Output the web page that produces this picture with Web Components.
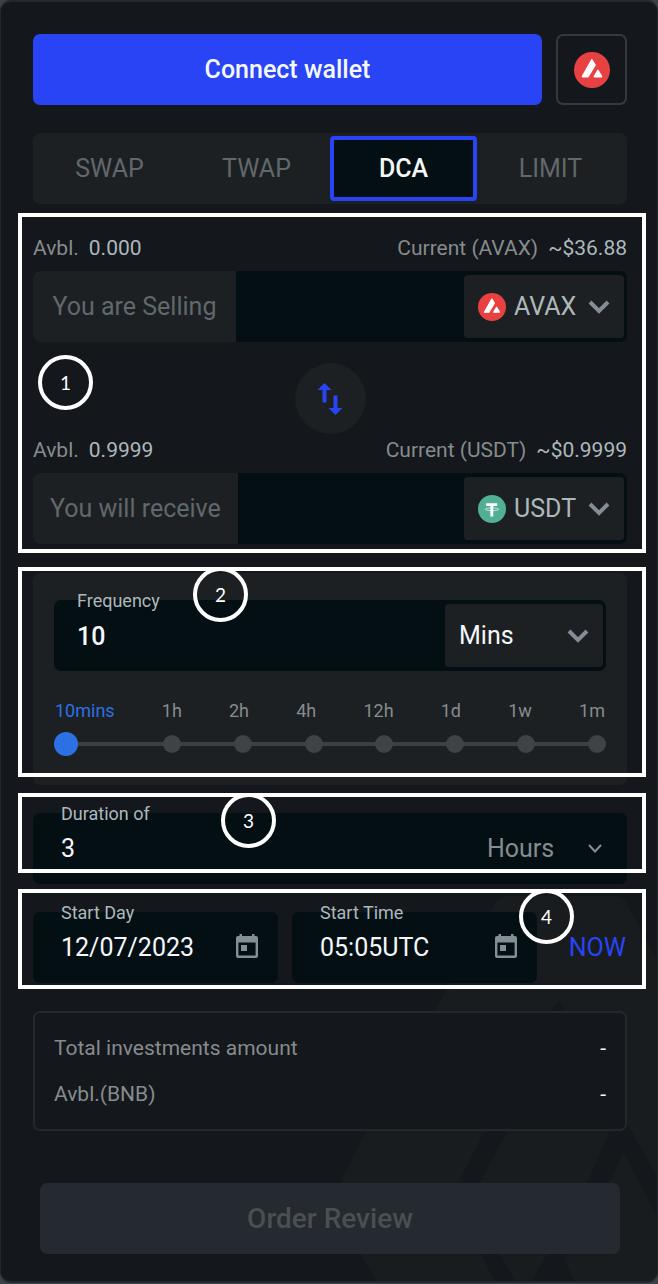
<!DOCTYPE html>
<html lang="en">
<head>
<meta charset="utf-8">
<meta name="viewport" content="width=device-width, initial-scale=1">
<title>DCA order</title>
<style>
  body {
    margin: 0;
    background: #3b4144;
    font-family: Roboto, "Liberation Sans", sans-serif;
    --surface: #14171b;
    --raised: #1c2022;
    --well: #040f14;
    --line: #21292d;
    --accent: #2944f5;
    --blue: #2b71e4;
    --muted: #60686b;
    --soft: #858c8e;
    --value: #adb8bd;
    --bright: #f4f8fa;
    --control: 71px;
    color: var(--value);
  }
</style>
</head>
<body>
<order-panel>
  <wallet-bar></wallet-bar>
  <mode-tabs></mode-tabs>
  <step-note number="1" style="--top:-19px;--bottom:-9px;--bx:16px;--by:138px">
    <token-pair></token-pair>
  </step-note>
  <step-note number="2" style="--top:-5px;--bottom:8px;--bx:171px">
    <frequency-card></frequency-card>
  </step-note>
  <step-note number="3" style="--top:-20px;--bottom:11px;--bx:199px">
    <duration-field></duration-field>
  </step-note>
  <step-note number="4" style="--top:-23px;--bottom:-6px;--bx:497px">
    <start-row></start-row>
  </step-note>
  <order-summary></order-summary>
  <review-button></review-button>
</order-panel>

<script>
const define = (name, html) => customElements.define(name, class extends HTMLElement {
  constructor() {
    super();
    const t = document.createElement('template');
    t.innerHTML = '<style>*{box-sizing:border-box}button,input,select{font:inherit;color:inherit;border:0;margin:0;padding:0;background:none;border-radius:0}svg{display:block}</style>' + (typeof html === 'function' ? html(this) : html);
    this.attachShadow({ mode: 'open' }).append(t.content.cloneNode(true));
  }
});

define('order-panel', `
<style>
  :host { display: flow-root; position: relative; overflow: hidden; background: var(--surface); border: 1px solid var(--line); border-width: 2px 1px; border-radius: 11px; }
  .mark { position: absolute; right: 0; bottom: 0; width: 319px; height: 392px; }
  main { position: relative; display: flex; flex-direction: column; gap: 28px; padding: 32px 30px 27px 32px; }
</style>
<svg class="mark" viewBox="339 892 319 392" fill="#181c1e" aria-hidden="true">
  <path d="M506 899H618Q624 899 627 905L658 962V1180L562 1007Q560 1003 557 1007L487 1132L461 1182Q452 1200 462 1219L496 1284H377L342 1222Q333 1206 342 1182L368 1132L492 914Q499 899 506 899Z"/>
  <path d="M515 1123H616L590 1182L533 1284H516L482 1222Q474 1208 482 1182Z"/>
  <path d="M624 1155L658 1218V1284H576L565 1263L612 1182Z"/>
</svg>
<main><slot></slot></main>`);

const avax = '<svg viewBox="0 0 36 36" aria-hidden="true"><circle cx="18" cy="18" r="18" fill="#e84142"/><path d="M17.8 7.8 21 13 14 24.6H8.4ZM23.9 18.4 27.6 24.6H20.3Z" fill="#fff" stroke="#fff" stroke-width="1.6" stroke-linejoin="round"/></svg>';
const usdt = '<svg viewBox="0 0 86 86" aria-hidden="true"><circle cx="43" cy="43" r="43" fill="#50af95"/><path d="M25 25H59V34H47V66H38V34H25Z" fill="#fff"/><ellipse cx="43" cy="44" rx="21" ry="4" fill="none" stroke="#fff" stroke-width="2"/></svg>';
const chevron = '<svg class="chev" viewBox="0 0 22 14" width="22" height="14" aria-hidden="true"><path d="M2 2 11 11 20 2" fill="none" stroke="#858c96" stroke-width="4"/></svg>';
const calendar = '<svg viewBox="0 0 22 24" width="22" height="24" aria-hidden="true"><path fill="#858f93" fill-rule="evenodd" d="M3.500 0H6V2H16V0H18.500V2H20Q22 2 22 4V22Q22 24 20 24H2Q0 24 0 22V4Q0 2 2 2H3.500ZM2.400 8.500V21.600H19.600V8.500ZM5 11H11V17H5Z"/></svg>';

define('wallet-bar', `
<style>
  :host { display: flex; gap: 14px; }
  button { height: var(--control); border-radius: 7px; cursor: pointer; }
  .connect { flex: 1; background: var(--accent); color: var(--bright); font-size: 25px; font-weight: 500; }
  .chain { width: var(--control); border: 2px solid #363a3d; display: grid; place-items: center; }
  svg { width: 36px; }
</style>
<button class="connect">Connect wallet</button>
<button class="chain" aria-label="Avalanche network">${avax}</button>`);

define('mode-tabs', `
<style>
  :host { display: block; }
  div { display: grid; grid-template-columns: repeat(4, 1fr); height: var(--control); padding: 3px; border-radius: 7px; background: var(--raised); }
  button { font-size: 25px; color: var(--muted); border-radius: 4px; }
  button[aria-selected=true] { border: 4px solid var(--accent); background: var(--well); color: var(--bright); font-weight: 500; }
</style>
<div role="tablist">
  <button role="tab" aria-selected="false">SWAP</button>
  <button role="tab" aria-selected="false">TWAP</button>
  <button role="tab" aria-selected="true">DCA</button>
  <button role="tab" aria-selected="false">LIMIT</button>
</div>`);

define('step-note', el => `
<style>
  :host { display: block; position: relative; }
  .frame { position: absolute; z-index: 2; inset: var(--top) -19px var(--bottom) -15px; border: 4px solid #fff; pointer-events: none; }
  .badge { position: absolute; top: var(--by, -4px); left: var(--bx); width: 55px; height: 55px; border: 4px solid #fff; border-radius: 50%; display: grid; place-items: center; color: #fff; font: 19px/24px Lato, sans-serif; }
</style>
<slot></slot>
<div class="frame"><span class="badge">${el.getAttribute('number')}</span></div>`);

define('token-row', el => {
  const a = n => el.getAttribute(n);
  return `
<style>
  :host { display: block; }
  .info { display: flex; justify-content: space-between; height: 30px; line-height: 30px; margin-bottom: 8px; font-size: 21px; color: var(--soft); }
  .info span { display: flex; gap: 10px; }
  b { font-weight: 400; color: var(--value); }
  .field { display: flex; height: var(--control); border-radius: 7px; overflow: hidden; background: var(--well); }
  label { display: grid; place-items: center; min-width: 203px; padding: 0 17px; background: var(--raised); color: var(--muted); font-size: 25px; }
  input { flex: 1; min-width: 0; padding: 0 14px; font-size: 25px; outline: 0; }
  .pick { display: grid; grid-template-columns: 28px 1fr 22px; align-items: center; width: 160px; margin: 4px 3px; padding: 0 14px; border-radius: 4px; background: var(--raised); }
  .pick > * { grid-row: 1; }
  .icon { grid-column: 1; pointer-events: none; }
  .chev { grid-column: 3; pointer-events: none; }
  select { grid-column: 1 / -1; appearance: none; padding-left: 36px; height: 63px; font-size: 25px; }
</style>
<div class="info"><span>Avbl. <b>${a('balance')}</b></span><span>Current (${a('token')}) <b>${a('price')}</b></span></div>
<div class="field">
  <label for="amount">${a('label')}</label>
  <input id="amount" inputmode="decimal">
  <div class="pick">
    <select aria-label="Token"><option>${a('token')}</option></select>
    <span class="icon">${a('token') === 'AVAX' ? avax : usdt}</span>${chevron}
  </div>
</div>`;
});

define('token-pair', `
<style>
  :host { display: block; padding-top: 1px; }
  .swap { display: grid; place-items: center; width: var(--control); height: var(--control); margin: 21px auto 1px; border-radius: 50%; background: var(--raised); }
</style>
<token-row label="You are Selling" balance="0.000" token="AVAX" price="~$36.88"></token-row>
<button class="swap" aria-label="Swap tokens"><svg viewBox="0 0 26 32" width="26" height="32" fill="#2944f5"><path d="M7.500 0 14.500 7H9.500V19.500H5.500V7H.5ZM16.500 12.500H20.500V25H25.500L18.500 32 11.500 25H16.500Z"/></svg></button>
<token-row label="You will receive" balance="0.9999" token="USDT" price="~$0.9999"></token-row>`);

define('frequency-card', `
<style>
  :host { display: block; padding: 27px 21px 29px; border-radius: 7px; background: var(--raised); margin-top: 1px; }
  .field { position: relative; display: flex; height: var(--control); border-radius: 7px; background: var(--well); }
  .field > label { position: absolute; top: -11px; left: 23px; font-size: 18px; line-height: 24px; }
  #every { flex: 1; min-width: 0; padding: 1px 0 0 23px; color: var(--bright); font-size: 25px; font-weight: 500; outline: 0; }
  .pick { display: grid; grid-template-columns: 1fr 22px; align-items: center; width: 158px; margin: 4px 3px; padding: 0 14px; border-radius: 4px; background: var(--raised); color: var(--bright); }
  .pick > * { grid-row: 1; }
  select { grid-column: 1 / -1; appearance: none; height: 63px; font-size: 25px; }
  .chev { grid-column: 2; pointer-events: none; }
  .labels { display: flex; justify-content: space-between; margin: 28px 1px 9px; font-size: 18px; line-height: 24px; color: var(--soft); }
  .labels :first-child { color: var(--blue); }
  .slider { display: grid; height: 24px; align-items: center; }
  .slider > * { grid-area: 1 / 1; }
  .rail { height: 4px; margin: 0 9px 0 12px; background: #3c4043; }
  .dots { display: grid; grid-template-columns: 24px 103fr repeat(6, 71fr); justify-items: end; }
  .dots i { width: 18px; height: 18px; border-radius: 50%; background: #3f4346; }
  #preset { appearance: none; width: 100%; height: 24px; }
  #preset::-webkit-slider-thumb { appearance: none; width: 24px; height: 24px; border-radius: 50%; background: var(--blue); }
</style>
<div class="field">
  <label for="every">Frequency</label>
  <input id="every" value="10" inputmode="numeric">
  <div class="pick"><select aria-label="Frequency unit"><option>Mins</option></select>${chevron}</div>
</div>
<div class="labels"><span>10mins</span><span>1h</span><span>2h</span><span>4h</span><span>12h</span><span>1d</span><span>1w</span><span>1m</span></div>
<div class="slider">
  <div class="rail"></div>
  <div class="dots"><i></i><i></i><i></i><i></i><i></i><i></i><i></i><i></i></div>
  <input id="preset" type="range" min="0" max="15" value="0" aria-label="Frequency preset">
</div>`);

define('duration-field', `
<style>
  :host { display: flex; position: relative; height: var(--control); border-radius: 7px; background: var(--well); }
  label { position: absolute; top: -11px; left: 28px; font-size: 18px; line-height: 24px; }
  input { flex: 1; min-width: 0; padding-left: 28px; color: var(--bright); font-size: 25px; outline: 0; }
  .pick { display: grid; grid-template-columns: 1fr 14px; align-items: center; width: 140px; padding-right: 25px; color: var(--soft); }
  .pick > * { grid-row: 1; }
  select { grid-column: 1 / -1; appearance: none; height: 63px; font-size: 25px; }
  svg { grid-column: 2; pointer-events: none; }
</style>
<label for="length">Duration of</label>
<input id="length" value="3" inputmode="numeric">
<div class="pick"><select aria-label="Duration unit"><option>Hours</option></select>
<svg viewBox="0 0 14 9" width="14" height="9" aria-hidden="true"><path d="M1 1 7 7.500 13 1" fill="none" stroke="#858f93" stroke-width="2"/></svg></div>`);

define('stamp-field', el => `
<style>
  :host { display: flex; align-items: center; position: relative; min-width: 0; height: var(--control); padding: 0 20px 0 28px; border-radius: 7px; background: var(--well); }
  label { position: absolute; top: -11px; left: 28px; font-size: 18px; line-height: 24px; }
  input { flex: 1; min-width: 0; color: var(--bright); font-size: 25px; outline: 0; }
  svg { margin-bottom: 4px; }
</style>
<label for="stamp">${el.getAttribute('label')}</label>
<input id="stamp" value="${el.getAttribute('value')}">${calendar}`);

define('start-row', `
<style>
  :host { display: grid; grid-template-columns: 1fr 1fr 76px; gap: 14px; }
  button { text-align: right; color: var(--accent); font-size: 25px; padding-right: 1px; }
</style>
<stamp-field label="Start Day" value="12/07/2023"></stamp-field>
<stamp-field label="Start Time" value="05:05UTC"></stamp-field>
<button>NOW</button>`);

define('order-summary', `
<style>
  :host { display: block; }
  dl { margin: 0; padding: 12px 19px; border: 2px solid var(--line); border-radius: 7px; background: var(--surface); font-size: 21px; line-height: 46px; color: var(--soft); }
  div { display: flex; justify-content: space-between; }
  dd { margin: 0; color: var(--bright); }
</style>
<dl>
  <div><dt>Total investments amount</dt><dd>-</dd></div>
  <div><dt>Avbl.(BNB)</dt><dd>-</dd></div>
</dl>`);

define('review-button', `
<style>
  :host { display: block; padding: 24px 7px 0; }
  button { width: 100%; height: var(--control); border-radius: 7px; background: #242a2f; color: #4a4f51; font-size: 28px; font-weight: 500; }
</style>
<button disabled>Order Review</button>`);
</script>
</body>
</html>
